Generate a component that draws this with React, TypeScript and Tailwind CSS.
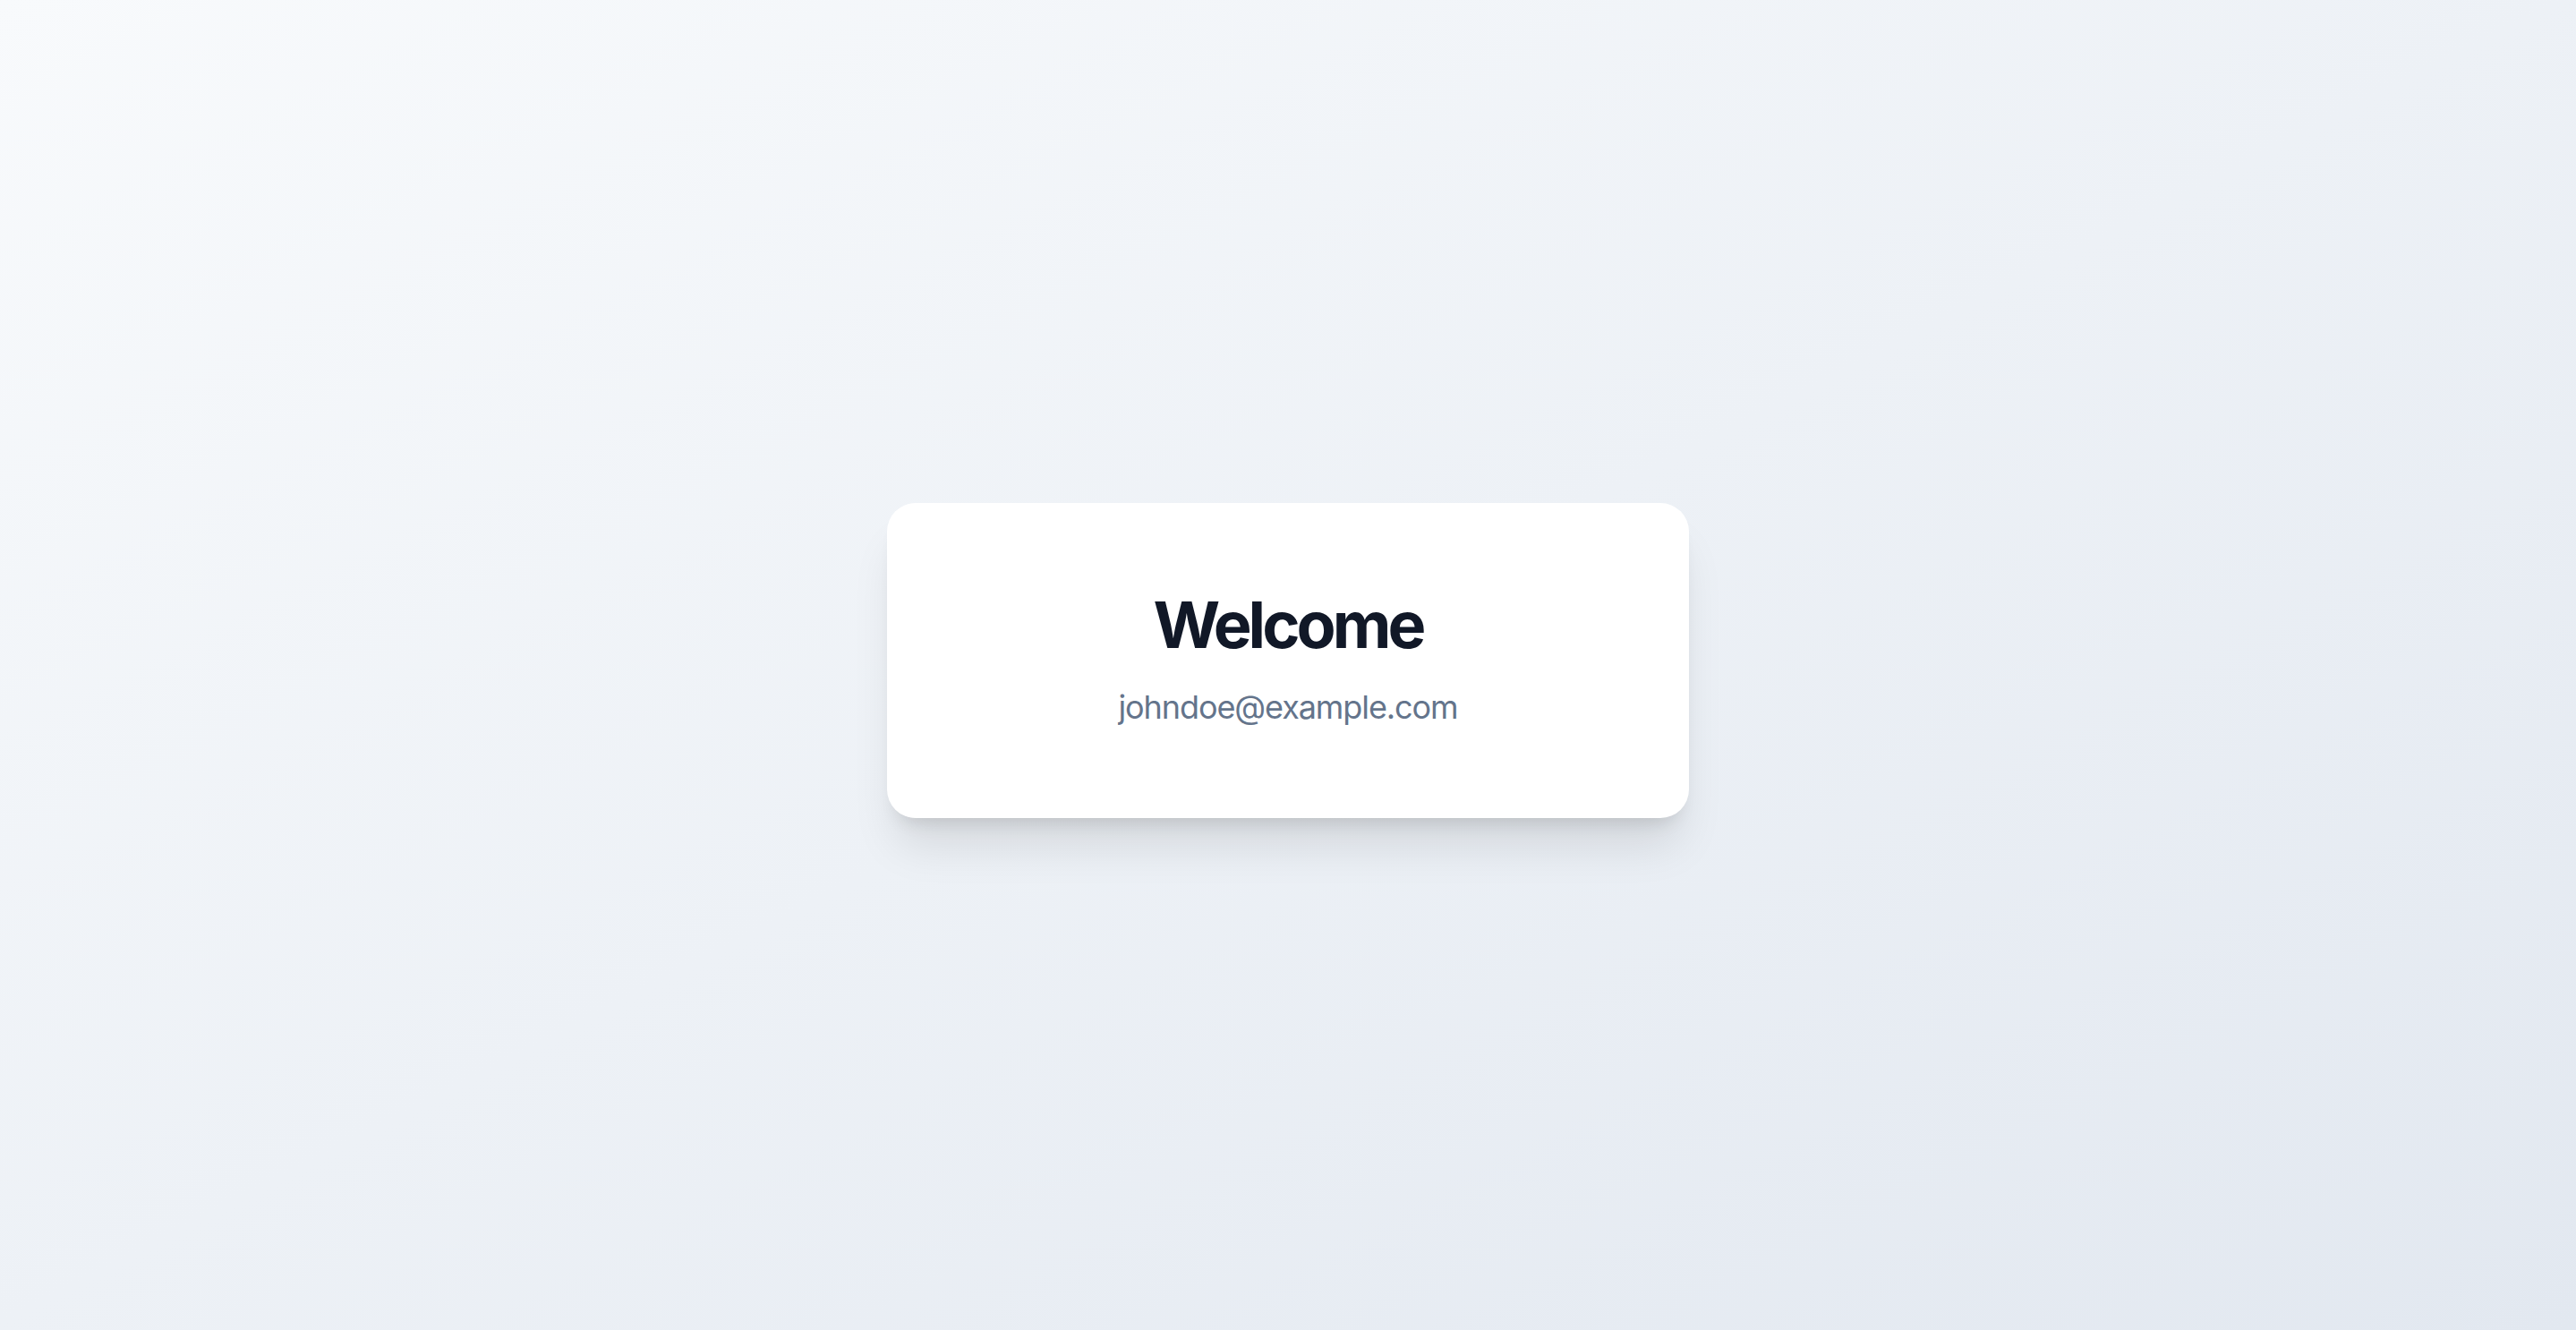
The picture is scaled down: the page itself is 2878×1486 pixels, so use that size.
export default function App() {
  return (
    <main className="min-h-screen w-full flex items-center justify-center pb-[10px] bg-linear-to-br from-[#f8fafc] to-[#e2e8f0] font-['Inter','Liberation_Sans',sans-serif]">
      <div className="w-[896px] rounded-[32px] bg-white p-[96px] text-center shadow-[0_40px_50px_-10px_rgba(0,0,0,0.1),0_16px_20px_-12px_rgba(0,0,0,0.12)]">
        <h1 className="text-[72px] leading-[80px] font-bold tracking-[-0.055em] text-[#111827]">Welcome</h1>
        <p className="mt-[24px] text-[36px] leading-[56px] tracking-[-0.03em] text-[#64748b]">johndoe@example.com</p>
      </div>
    </main>
  )
}
